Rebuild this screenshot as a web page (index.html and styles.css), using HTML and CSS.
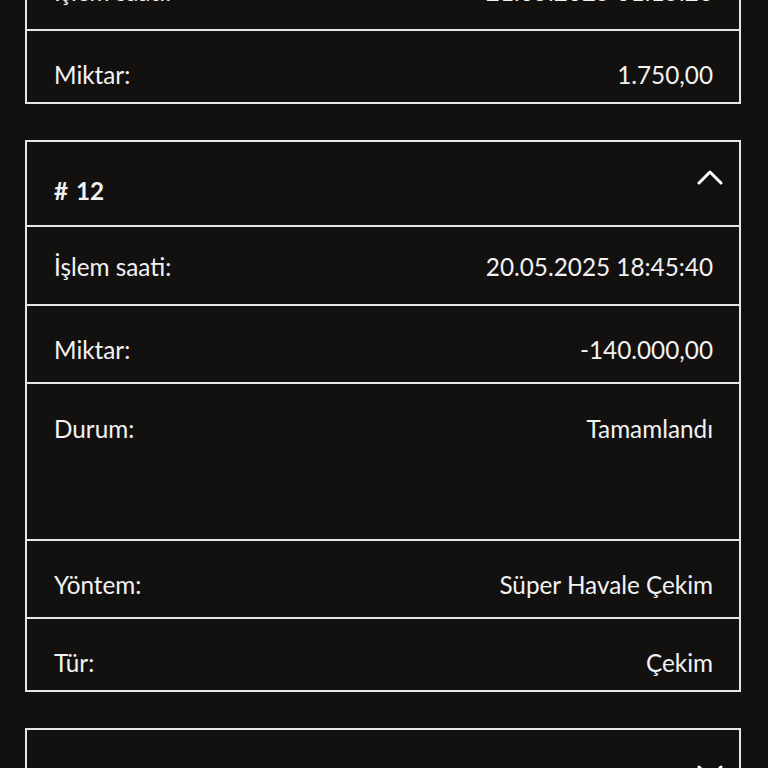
FILE: index.html
```html
<!DOCTYPE html>
<html lang="tr">
<head>
<meta charset="utf-8">
<title>İşlemler</title>
<link rel="stylesheet" href="styles.css">
</head>
<body>
<div class="list">
  <div class="card">
    <div class="head">
      <span class="title"># 13</span>
      <svg class="chev" width="26" height="18" viewBox="0 0 26 18"><polyline points="2,15 13,4 24,15" fill="none" stroke="#fff" stroke-width="3" stroke-linecap="round" stroke-linejoin="round"/></svg>
    </div>
    <div class="row first"><span>İşlem saati:</span><span>21.05.2025 01:15:20</span></div>
    <div class="row last"><span>Miktar:</span><span>1.750,00</span></div>
  </div>

  <div class="card">
    <div class="head">
      <span class="title"># 12</span>
      <svg class="chev" width="26" height="18" viewBox="0 0 26 18"><polyline points="2,15 13,4 24,15" fill="none" stroke="#fff" stroke-width="3" stroke-linecap="round" stroke-linejoin="round"/></svg>
    </div>
    <div class="row first"><span>İşlem saati:</span><span>20.05.2025 18:45:40</span></div>
    <div class="row"><span>Miktar:</span><span>-140.000,00</span></div>
    <div class="row tall"><span>Durum:</span><span>Tamamlandı</span></div>
    <div class="row"><span>Yöntem:</span><span>Süper Havale Çekim</span></div>
    <div class="row last"><span>Tür:</span><span>Çekim</span></div>
  </div>

  <div class="card">
    <div class="head">
      <span class="title"># 11</span>
      <svg class="chev down" width="26" height="18" viewBox="0 0 26 18"><polyline points="2,4 13,15 24,4" fill="none" stroke="#fff" stroke-width="3" stroke-linecap="round" stroke-linejoin="round"/></svg>
    </div>
  </div>
</div>
</body>
</html>
```

FILE: styles.css
```css
html, body {
  margin: 0;
  padding: 0;
  background: #121110;
  color: #f2f2f2;
  font-family: Lato, "Noto Sans", sans-serif;
  font-size: 24.3px;
  overflow: hidden;
}

.list {
  margin-top: -135px;
  padding: 0 27px 0 25px;
  display: flex;
  flex-direction: column;
  gap: 36px;
}

.card {
  border: 2px solid #e6e6e6;
}

.head {
  height: 83px;
  display: flex;
  justify-content: space-between;
  align-items: flex-start;
  padding: 0 16px 0 27px;
}

.title {
  font-weight: 700;
  line-height: 26px;
  margin-top: 36px;
  word-spacing: 2px;
}

.chev {
  margin-top: 26px;
}

.chev.down {
  margin-top: 33px;
}

.row {
  border-top: 2px solid #e6e6e6;
  display: flex;
  justify-content: space-between;
  align-items: flex-start;
  line-height: 26px;
  padding: 31px 26px 0 27px;
  height: 78px;
  box-sizing: border-box;
}

.row.first {
  padding-top: 27px;
  height: 79px;
}

.row.tall {
  height: 157px;
  padding-top: 32px;
}

.row.last {
  height: 73px;
}
```
